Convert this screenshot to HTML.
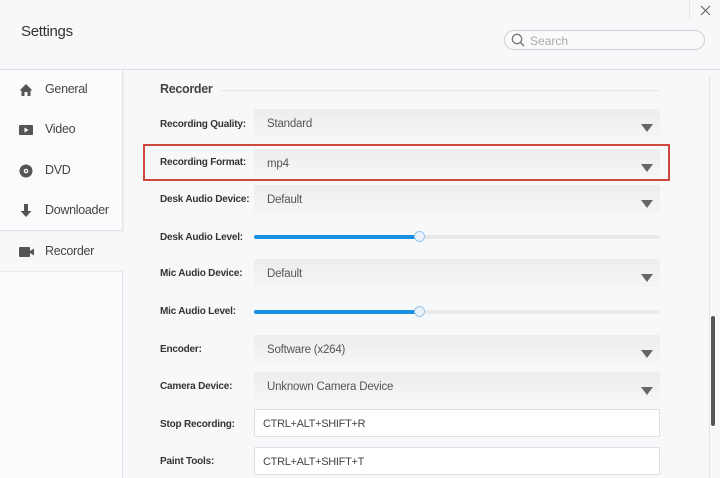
<!DOCTYPE html>
<html><head><meta charset="utf-8"><style>
*{box-sizing:border-box;margin:0;padding:0}
body{width:720px;height:478px;overflow:hidden;background:#f7f8f9;font-family:"Liberation Sans",sans-serif;position:relative;color:#333}
.abs{position:absolute}
.title{left:21px;top:23px;font-size:15px;color:#333;letter-spacing:-0.3px}
.hdrline{left:0;top:69px;width:720px;height:1px;background:#dcdde0}
.search{left:504px;top:30px;width:201px;height:20px;border:1px solid #cfd1d4;border-radius:10px;background:#f9fafb}
.search span{position:absolute;left:25px;top:3px;font-size:12px;color:#aaa}
.card{background:#fafbfc;border-right:1px solid #e2e3e6}
.nav{left:19px;font-size:12.5px;color:#444;letter-spacing:-0.3px}
.nav svg{position:absolute;left:0;top:1px}
.nav span{position:absolute;left:26px;top:0;white-space:nowrap}
.lbl{left:160px;font-size:10px;font-weight:bold;color:#333;letter-spacing:-0.2px;white-space:nowrap}
.sel{left:254px;width:406px;height:28px;background:linear-gradient(#ededee,#f4f5f6);border-radius:2px}
.sel span{position:absolute;left:13px;top:9px;font-size:11.5px;color:#555;letter-spacing:-0.2px}
.sel i{position:absolute;right:7px;top:15px;width:0;height:0;border-left:6px solid transparent;border-right:6px solid transparent;border-top:8px solid #666}
.inp{left:254px;width:406px;height:28px;background:#fff;border:1px solid #dddfe2;border-radius:2px}
.inp span{position:absolute;left:8px;top:8px;font-size:11px;color:#444;letter-spacing:-0.3px}
.track{left:254px;width:406px;height:4px;background:#e8e9eb;border-radius:2px}
.track b{position:absolute;left:0;top:0;width:165px;height:4px;background:#1a8fe3;border-radius:2px}
.track em{position:absolute;left:160px;top:-4px;width:11px;height:11px;border-radius:50%;background:#e9f2fb;border:1px solid #9cc4ea}
</style></head><body>
<div class="abs title">Settings</div>
<div class="abs" style="left:689px;top:0;width:1px;height:20px;background:#e6e7e9"></div>
<svg class="abs" style="left:700px;top:5px" width="11" height="11"><path d="M1 1L10 10M10 1L1 10" stroke="#666" stroke-width="1.2"/></svg>
<div class="abs search"><svg style="position:absolute;left:6px;top:2px" width="14" height="14"><circle cx="6" cy="6" r="4.7" fill="none" stroke="#777" stroke-width="1.3"/><path d="M9.5 9.5L13 13" stroke="#777" stroke-width="1.4"/></svg><span>Search</span></div>
<div class="abs hdrline"></div>

<div class="abs card" style="left:0;top:70px;width:123px;height:161px;border-bottom:1px solid #e2e3e6;box-shadow:1px 1px 2px rgba(0,0,0,0.04)"></div>
<div class="abs card" style="left:0;top:271px;width:123px;height:207px;border-top:1px solid #e8e9eb"></div>

<div class="abs nav" style="top:82px"><svg width="14" height="14"><path d="M7 1L0.5 7.5H2.5V13H5.5V9H8.5V13H11.5V7.5H13.5Z" fill="#555"/></svg><span>General</span></div>
<div class="abs nav" style="top:122px"><svg width="14" height="14"><rect x="0" y="2" width="14" height="10" rx="1" fill="#555"/><path d="M5.5 4.5L9.5 7L5.5 9.5Z" fill="#fff"/></svg><span>Video</span></div>
<div class="abs nav" style="top:163px"><svg width="14" height="14"><circle cx="7" cy="7" r="6.5" fill="#555"/><circle cx="7" cy="7" r="2.3" fill="#fff"/><circle cx="7" cy="7" r="1" fill="#555"/></svg><span>DVD</span></div>
<div class="abs nav" style="top:203px"><svg width="14" height="14"><path d="M5 0H9V7H12.5L7 13L1.5 7H5Z" fill="#555"/></svg><span>Downloader</span></div>
<div class="abs nav" style="top:244px"><svg width="16" height="14"><rect x="0" y="2" width="11" height="10" rx="1" fill="#555"/><path d="M11 6L15 3.5V10.5L11 8Z" fill="#555"/></svg><span>Recorder</span></div>

<div class="abs" style="left:160px;top:82px;font-size:12.5px;font-weight:bold;color:#444;letter-spacing:-0.3px">Recorder</div>
<div class="abs" style="left:221px;top:90px;width:438px;height:1px;background:#e6e7e9"></div>

<div class="abs" style="left:709px;top:77px;width:1px;height:401px;background:#e3e4e6"></div>
<div class="abs" style="left:711px;top:316px;width:4px;height:110px;background:#555;border-radius:2px"></div>

<div class="abs lbl" style="top:119px">Recording Quality:</div>
<div class="abs sel" style="top:109px"><span>Standard</span><i></i></div>

<div class="abs" style="left:143px;top:144px;width:527px;height:37px;border:2px solid #d0473f"></div>
<div class="abs lbl" style="top:157px">Recording Format:</div>
<div class="abs sel" style="top:149px;height:27px"><span>mp4</span><i></i></div>

<div class="abs lbl" style="top:194px">Desk Audio Device:</div>
<div class="abs sel" style="top:185px"><span>Default</span><i></i></div>

<div class="abs lbl" style="top:232px">Desk Audio Level:</div>
<div class="abs track" style="top:235px"><b></b><em></em></div>

<div class="abs lbl" style="top:268px">Mic Audio Device:</div>
<div class="abs sel" style="top:259px"><span>Default</span><i></i></div>

<div class="abs lbl" style="top:306px">Mic Audio Level:</div>
<div class="abs track" style="top:310px"><b></b><em></em></div>

<div class="abs lbl" style="top:344px">Encoder:</div>
<div class="abs sel" style="top:335px"><span>Software (x264)</span><i></i></div>

<div class="abs lbl" style="top:381px">Camera Device:</div>
<div class="abs sel" style="top:372px"><span>Unknown Camera Device</span><i></i></div>

<div class="abs lbl" style="top:419px">Stop Recording:</div>
<div class="abs inp" style="top:409px"><span>CTRL+ALT+SHIFT+R</span></div>

<div class="abs lbl" style="top:456px">Paint Tools:</div>
<div class="abs inp" style="top:447px"><span>CTRL+ALT+SHIFT+T</span></div>
</body></html>
